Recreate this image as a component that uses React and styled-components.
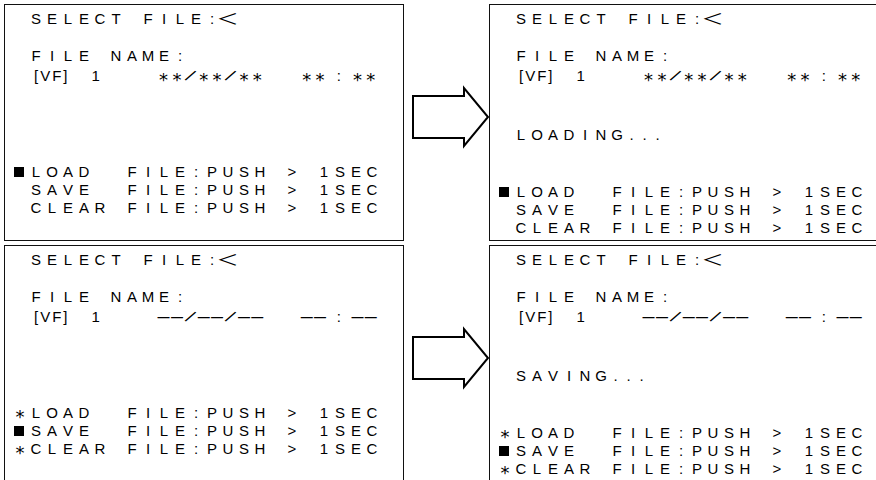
import React from 'react';
import styled, { createGlobalStyle } from 'styled-components';

const GlobalStyle = createGlobalStyle`
  html, body {
    margin: 0;
    padding: 0;
    background: #fff;
  }
  body {
    width: 876px;
    height: 480px;
    overflow: hidden;
    font-family: "Liberation Sans", Arial, sans-serif;
    color: #000;
  }
`;

// character pitches: the LCD text sits in fixed cells, the date stamp is tighter
const TEXT_PITCH = { '.': 13, default: 16 };
const STAMP_PITCH = { ' ': 12, ':': 24, default: 13.4 };

const Board = styled.div`
  display: grid;
  grid-template-columns: 400px 85px 400px;
  grid-template-rows: 237px 245px;
  row-gap: 4px;
  padding: 4px 0 0 4px;
`;

const Panel = styled.section`
  box-sizing: border-box;
  border: 1px solid #111;
  padding: 5px 0 0 7px;
  font-size: 15px;
  line-height: 18px;
  display: flex;
  flex-direction: column;
  overflow: hidden;
`;

const ArrowSlot = styled.div`
  padding-top: 82px;
  svg {
    display: block;
    overflow: visible;
  }
`;

const Line = styled.div`
  display: flex;
  align-items: baseline;
  height: 18px;
  margin-top: ${p => p.$gap || 0}px;
  white-space: pre;
`;

const Menu = styled.div`
  margin-top: ${p => p.$gap}px;
`;

const Cell = styled.span`
  display: inline-flex;
  justify-content: center;
  align-items: baseline;
  flex: none;
  width: ${p => p.$w}px;
`;

const Cursor = styled.span`
  display: inline-block;
  width: 10px;
  height: 10px;
  margin-left: -2px;
  background: #000;
`;

const Star = styled.span`
  font-family: "DejaVu Sans", sans-serif;
  font-size: 18px;
  line-height: 0.8;
  color: #000;
  transform: translateY(5px);
`;

const Wide = styled.span`
  font-family: "Noto Sans CJK JP", sans-serif;
  font-size: 15px;
  line-height: 1;
  color: #000;
  transform: scaleX(1.5);
`;

const Slash = styled.span`
  display: inline-block;
  transform: rotate(34deg) scale(1.2);
`;

const Dash = styled.span`
  font-size: 12px;
  line-height: 1;
  transform: translateY(-1.5px) scaleY(1.4);
`;

const Tag = styled.span`
  margin-left: 6px;
  letter-spacing: 2px;
`;

const Num = styled.span`
  margin-left: 22px;
`;

const Stamp = styled.span`
  display: flex;
  align-items: baseline;
  margin-left: 57px;
`;

const glyphFor = c => {
  switch (c) {
    case '*': return <Star>*</Star>;
    case '/': return <Slash>/</Slash>;
    case '-': return <Dash>—</Dash>;
    case '<': return <Wide>＜</Wide>;
    case ' ': return '\u00a0';
    default: return c;
  }
};

const Chars = ({ text, pitch = TEXT_PITCH }) =>
  [...text].map((c, i) => (
    <Cell key={i} $w={pitch[c] ?? pitch.default}>{glyphFor(c)}</Cell>
  ));

const Mark = ({ kind }) => (
  <Cell $w={16}>
    {kind === 'cursor' ? <Cursor /> : kind === 'star' ? <Star>*</Star> : '\u00a0'}
  </Cell>
);

const Arrow = () => (
  <svg width="85" height="62" viewBox="0 0 85 62">
    <polygon
      points="9,10 60,10 60,2 84,31 60,60 60,52 9,52"
      fill="#fff"
      stroke="#000"
      strokeWidth="2"
    />
  </svg>
);

const MENU = ['LOAD  ', 'SAVE  ', 'CLEAR '];

const Screen = ({ date, marks, status }) => (
  <Panel>
    <Line>
      <Chars text=" SELECT FILE:<" />
    </Line>
    <Line $gap={19}>
      <Chars text=" FILE NAME:" />
    </Line>
    <Line $gap={2}>
      <Chars text=" " />
      <Tag>[VF]</Tag>
      <Num>1</Num>
      <Stamp>
        <Chars text={date} pitch={STAMP_PITCH} />
      </Stamp>
    </Line>
    {status && (
      <Line $gap={41}>
        <Chars text={' ' + status} />
      </Line>
    )}
    <Menu $gap={status ? 39 : 78}>
      {MENU.map((label, i) => (
        <Line key={label}>
          <Mark kind={marks[i]} />
          <Chars text={label + 'FILE:PUSH > 1SEC'} />
        </Line>
      ))}
    </Menu>
  </Panel>
);

const STAR_DATE = '**/**/**   **:**';
const DASH_DATE = '--/--/--   --:--';

export default function App() {
  return (
    <>
      <GlobalStyle />
      <Board>
        <Screen date={STAR_DATE} marks={['cursor', null, null]} />
        <ArrowSlot>
          <Arrow />
        </ArrowSlot>
        <Screen date={STAR_DATE} marks={['cursor', null, null]} status="LOADING..." />

        <Screen date={DASH_DATE} marks={['star', 'cursor', 'star']} />
        <ArrowSlot>
          <Arrow />
        </ArrowSlot>
        <Screen date={DASH_DATE} marks={['star', 'cursor', 'star']} status="SAVING..." />
      </Board>
    </>
  );
}
